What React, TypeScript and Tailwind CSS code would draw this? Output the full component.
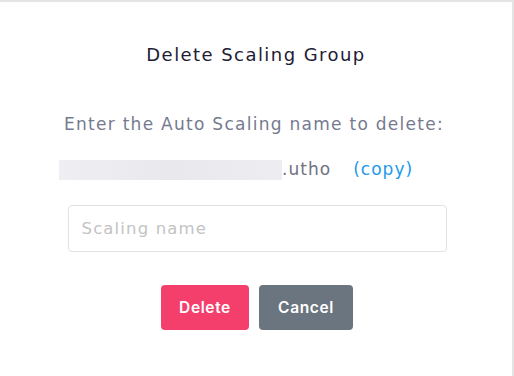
export default function App() {
  return (
    <div
      className="w-full h-[376px] bg-white border-t-2 border-r-2 border-[#e4e4e4] flex flex-col items-center"
      style={{ fontFamily: "'DejaVu Sans', Inter, sans-serif" }}
    >
      <h2 className="mt-[39px] text-[18px] tracking-[0.08em] text-[#1d2033] leading-[28px]">
        Delete Scaling Group
      </h2>

      <div className="w-[386px] mt-[43px] ml-[2px]">
        <p className="text-[17px] tracking-[0.075em] text-[#767a8f] leading-[24px] whitespace-nowrap">
          Enter the Auto Scaling name to delete:
        </p>
        <div className="mt-[24px] -ml-[5px] flex items-center h-[20px] text-[17px] tracking-[0.06em]">
          <div className="w-[223px] h-[20px] bg-gradient-to-r from-[#efeff3] via-[#e8e8ed] to-[#ececf1]" />
          <span className="text-[#6f7384]">.utho</span>
          <span className="ml-[22px] text-[#2199ee]">(copy)</span>
        </div>
      </div>

      <input
        type="text"
        placeholder="Scaling name"
        className="mt-[25px] ml-[2px] w-[379px] h-[47px] px-[13px] rounded-[4px] border border-[#e2e2e2] text-[16.5px] tracking-[0.07em] text-[#333] placeholder:text-[#c3c3c3] outline-none"
      />

      <div
        className="mt-[33px] flex gap-[10px] ml-[2px]"
        style={{ fontFamily: "Inter, 'DejaVu Sans', sans-serif" }}
      >
        <button className="w-[88px] h-[45px] rounded-[4px] bg-[#f43f6c] text-white text-[15.5px] font-semibold tracking-[0.04em]">
          Delete
        </button>
        <button className="w-[94px] h-[45px] rounded-[4px] bg-[#6b757f] text-white text-[15.5px] font-semibold tracking-[0.04em]">
          Cancel
        </button>
      </div>
    </div>
  );
}
